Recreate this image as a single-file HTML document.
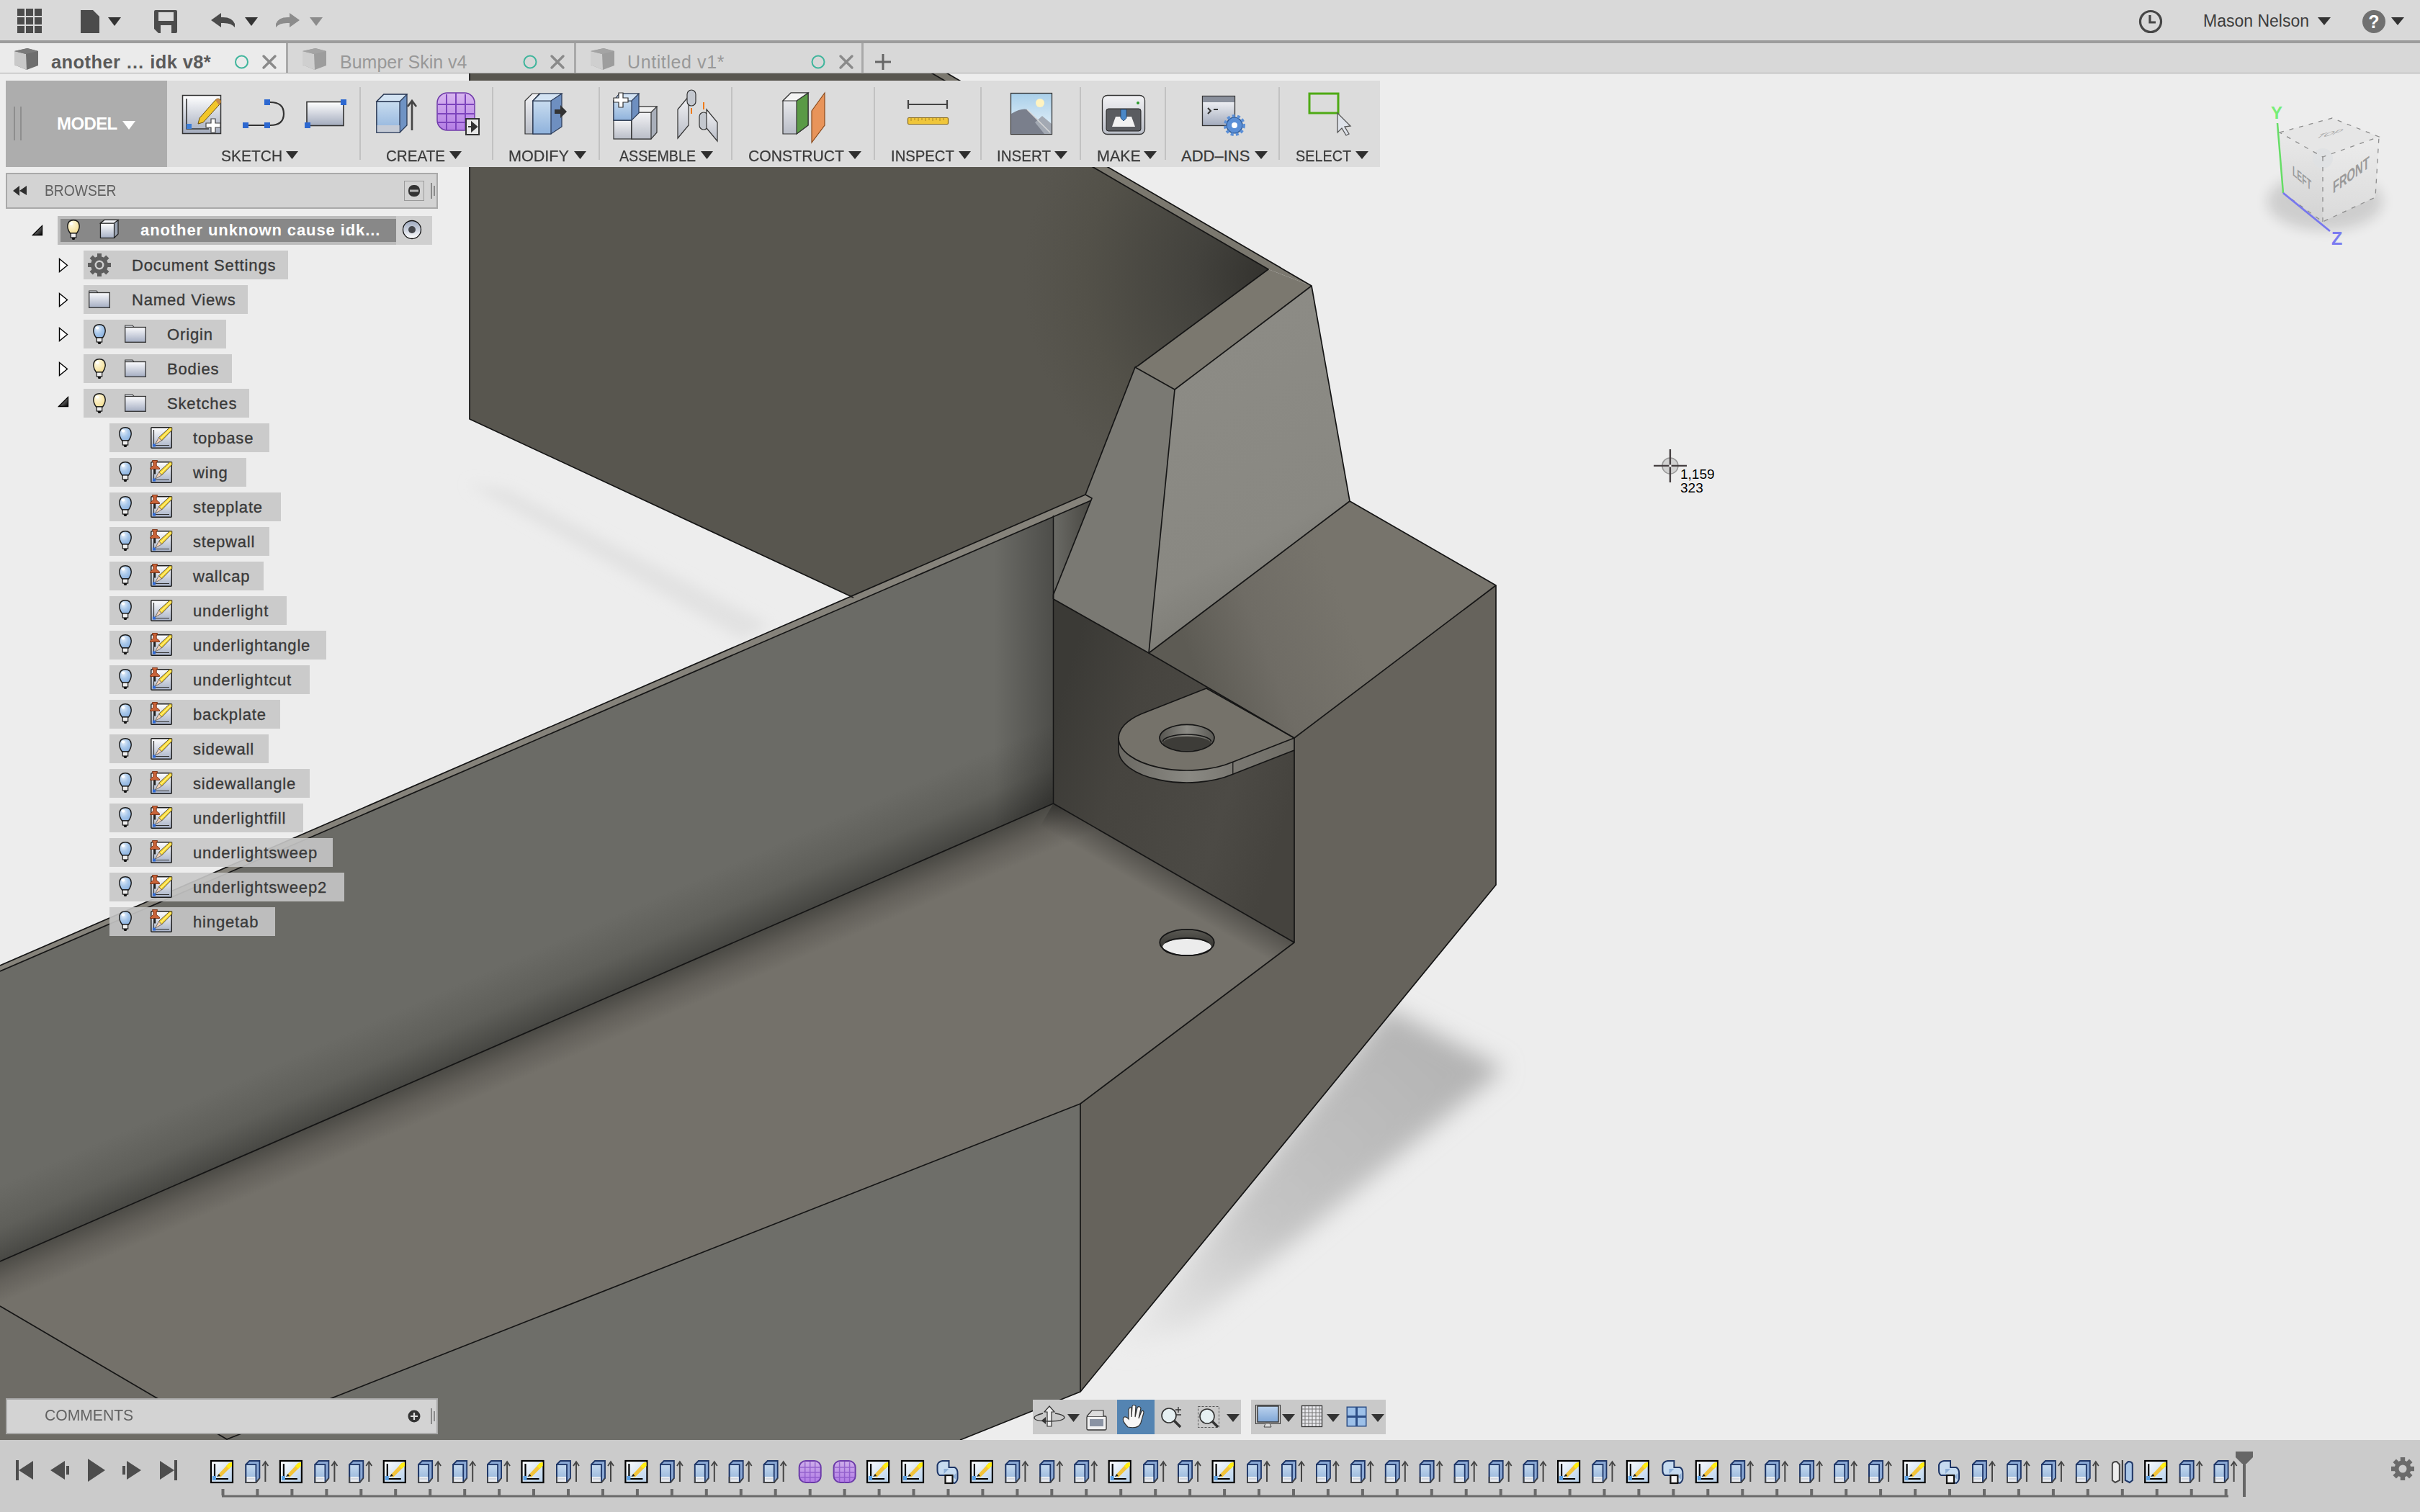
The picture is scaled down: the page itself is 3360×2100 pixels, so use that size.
<!DOCTYPE html>
<html><head><meta charset="utf-8">
<style>
html,body{margin:0;padding:0;}
body{width:3360px;height:2100px;overflow:hidden;position:relative;background:#ededed;font-family:"Liberation Sans",sans-serif;}
.a{position:absolute;}
svg.a{overflow:visible;}
#model{left:0;top:0;}
.tl{position:absolute;font-size:22px;color:#3a3a3a;white-space:nowrap;line-height:22px;-webkit-text-stroke:0.25px #3a3a3a;}
.sep{position:absolute;width:2px;height:101px;top:121px;background:#c2c2c2;}
.row{position:absolute;height:40px;background:rgba(199,199,199,0.9);}
.rt{position:absolute;font-size:23.5px;color:#3a3a3a;white-space:nowrap;line-height:24px;-webkit-text-stroke:0.35px #3a3a3a;}

</style></head><body>
<svg id="model" class="a" width="3360" height="2100" viewBox="0 0 3360 2100">
<defs>
<filter id="blur30" x="-50%" y="-50%" width="200%" height="200%"><feGaussianBlur stdDeviation="30"/></filter>
<filter id="blur12" x="-50%" y="-50%" width="200%" height="200%"><feGaussianBlur stdDeviation="16"/></filter>
<radialGradient id="gBack" cx="1761" cy="385" r="340" gradientUnits="userSpaceOnUse">
<stop offset="0" stop-color="#33322e"/><stop offset="0.3" stop-color="#43423d"/><stop offset="0.75" stop-color="#535149"/><stop offset="1" stop-color="#58564f"/></radialGradient>
<linearGradient id="gCornerAO" x1="1380" y1="0" x2="1463" y2="0" gradientUnits="userSpaceOnUse">
<stop offset="0" stop-color="#000" stop-opacity="0"/><stop offset="1" stop-color="#000" stop-opacity="0.28"/></linearGradient>
<radialGradient id="gWedgeAO" cx="1470" cy="840" r="170" gradientUnits="userSpaceOnUse">
<stop offset="0" stop-color="#000" stop-opacity="0.3"/><stop offset="1" stop-color="#000" stop-opacity="0"/></radialGradient>
<linearGradient id="gShadow" x1="1990" y1="1440" x2="1600" y2="1850" gradientUnits="userSpaceOnUse">
<stop offset="0" stop-color="#b4b4b4"/><stop offset="0.6" stop-color="#c4c4c4"/><stop offset="1" stop-color="#e6e6e6"/></linearGradient>
<linearGradient id="gFront" x1="560" y1="1400" x2="600" y2="1491" gradientUnits="userSpaceOnUse">
<stop offset="0" stop-color="#6b6b66"/><stop offset="0.55" stop-color="#5f5f5a"/><stop offset="1" stop-color="#474743"/></linearGradient>
<linearGradient id="gFloor" x1="600" y1="1491" x2="622" y2="1542" gradientUnits="userSpaceOnUse">
<stop offset="0" stop-color="#4b4a45"/><stop offset="0.5" stop-color="#64615b"/><stop offset="1" stop-color="#74716a"/></linearGradient>
<linearGradient id="gHinge" x1="1463" y1="1000" x2="1797" y2="1100" gradientUnits="userSpaceOnUse">
<stop offset="0" stop-color="#3b3a36"/><stop offset="0.3" stop-color="#46443f"/><stop offset="0.75" stop-color="#4c4a45"/><stop offset="1" stop-color="#45433e"/></linearGradient>
<linearGradient id="gTabSide" x1="1553" y1="0" x2="1797" y2="0" gradientUnits="userSpaceOnUse">
<stop offset="0" stop-color="#6a6862"/><stop offset="0.4" stop-color="#8a8983"/><stop offset="0.65" stop-color="#7a7872"/><stop offset="1" stop-color="#6f6d66"/></linearGradient>
<linearGradient id="gFloorAO2" x1="1630" y1="1212.5" x2="1611" y2="1245" gradientUnits="userSpaceOnUse">
<stop offset="0" stop-color="#000" stop-opacity="0.28"/><stop offset="1" stop-color="#000" stop-opacity="0"/></linearGradient>
<linearGradient id="gWedgeR" x1="1640" y1="500" x2="1850" y2="900" gradientUnits="userSpaceOnUse">
<stop offset="0" stop-color="#8c8b85"/><stop offset="0.6" stop-color="#898882"/><stop offset="1" stop-color="#6f6e68"/></linearGradient>
<linearGradient id="gStepTop" x1="1640" y1="880" x2="1850" y2="800" gradientUnits="userSpaceOnUse">
<stop offset="0" stop-color="#5d5b54"/><stop offset="0.45" stop-color="#6f6c65"/><stop offset="1" stop-color="#77746c"/></linearGradient>
</defs>
<!-- shadows -->
<filter id="blur8" x="-50%" y="-50%" width="200%" height="200%"><feGaussianBlur stdDeviation="9"/></filter><polygon points="650,672 705,680 1070,868 1030,888" fill="#e2e2e2" filter="url(#blur8)"/>
<polygon points="1926,1400 2088,1484 1650,1845 1555,1870" fill="url(#gShadow)" filter="url(#blur12)"/>
<!-- back wall -->
<polygon points="652,100 1291,100 1761,374 1580,508 1576,510 1507,687 1185,830 652,582" fill="url(#gBack)"/>
<polygon points="1291,100 1312,100 1821,397 1761,374" fill="#7b786f"/>
<polygon points="1761,374 1821,397 1631,541 1576,510 1580,508" fill="#7b786f"/>
<!-- wedge -->
<polygon points="1576,510 1631,541 1595,907 1462.5,832 1462.5,826 1516,693 1507,687" fill="#7a7973"/>

<polygon points="1631,541 1821,397 1874,696 1595,907" fill="url(#gWedgeR)"/>
<!-- step top -->
<polygon points="1874,696 2077,813 1797,1025 1595,907" fill="url(#gStepTop)"/>
<!-- inner hinge wall -->
<polygon points="1462.5,832 1595,907 1797,1025 1797,1309 1462.5,1116" fill="url(#gHinge)"/>
<!-- front wall -->
<polygon points="0,1349 1462.5,716 1462.5,1116 0,1752" fill="url(#gFront)"/>
<polygon points="1380,752 1462.5,716 1462.5,1116 1380,1152" fill="url(#gCornerAO)"/>
<linearGradient id="gEnd" x1="1463" y1="0" x2="1510" y2="0" gradientUnits="userSpaceOnUse"><stop offset="0" stop-color="#6a6a65"/><stop offset="1" stop-color="#4c4b46"/></linearGradient><polygon points="1462.5,716 1515,695 1462.5,826" fill="url(#gEnd)"/>
<polygon points="0,1341 1507,687 1516,692 1515,695 0,1349" fill="#86837b"/>
<!-- floor -->
<polygon points="0,1752 1462.5,1116 1797,1309 1500,1533 315,1999 0,1814" fill="url(#gFloor)"/>
<polygon points="1462.5,1116 1797,1309 1772,1352 1437.5,1159" fill="url(#gFloorAO2)"/>
<polygon points="0,1814 315,1999 315,2000 0,2000" fill="#6e6c66"/>
<polygon points="1500,1533 1500,1933 1333,2000 315,2000 315,1999" fill="#6e6e69"/>
<!-- step right face -->
<polygon points="1797,1025 2077,813 2077,1229 1500,1933 1500,1533 1797,1309" fill="#66635c"/>
<!-- hinge tab -->
<linearGradient id="gHoleWall" x1="1610" y1="0" x2="1686" y2="0" gradientUnits="userSpaceOnUse">
<stop offset="0" stop-color="#55544f"/><stop offset="0.5" stop-color="#8c8b85"/><stop offset="1" stop-color="#5a5954"/></linearGradient>
<linearGradient id="gHoleDark" x1="0" y1="1291" x2="0" y2="1310" gradientUnits="userSpaceOnUse">
<stop offset="0" stop-color="#5a5953"/><stop offset="1" stop-color="#3e3d39"/></linearGradient>
<clipPath id="cpHole1"><ellipse cx="1648" cy="1025" rx="38" ry="18.7"/></clipPath>
<clipPath id="cpHole2"><ellipse cx="1648" cy="1309" rx="37.8" ry="18.2"/></clipPath>
<path d="M1553,1025 A95,45 0 0 0 1711.8,1058.3 L1797,1025 L1797,1042 L1711.8,1075.3 A95,45 0 0 1 1553,1042 Z" fill="url(#gTabSide)"/>
<path d="M1675,956 L1797,1025 L1711.8,1058.3 A95,45 0 0 1 1553,1025 A95,45 0 0 1 1584.2,991.7 Z" fill="#75726a"/>
<ellipse cx="1648" cy="1025" rx="38" ry="18.7" fill="url(#gHoleWall)"/>
<ellipse cx="1648" cy="1032.8" rx="33.5" ry="10" fill="#3d3c38" clip-path="url(#cpHole1)"/>
<!-- floor hole -->
<ellipse cx="1648" cy="1309" rx="37.8" ry="18.2" fill="url(#gHoleDark)"/>
<ellipse cx="1648" cy="1315.5" rx="34" ry="11.6" fill="#ececec" clip-path="url(#cpHole2)"/>
<!-- edges -->
<g stroke="#151515" stroke-width="1.7" fill="none" stroke-linejoin="round">
<polyline points="652,100 652,582 1185,830"/>
<polyline points="1312,100 1821,397 1874,696 2077,813 2077,1229 1500,1933 1333,2000"/>
<polyline points="1291,100 1761,374 1580,508 1576,510 1507,687"/>
<polyline points="1576,510 1631,541 1821,397"/>
<polyline points="1631,541 1595,907 1874,696"/>
<polyline points="1595,907 1797,1025 2077,813"/>
<polyline points="1462.5,832 1595,907"/>
<polyline points="1797,1025 1797,1309 1500,1533 1500,1933"/>
<polyline points="1797,1309 1462.5,1116 0,1752"/>
<polyline points="1500,1533 315,1999 0,1814"/>
<polyline points="0,1341 1507,687 1516,692 1462.5,826 1462.5,832"/>
<polyline points="0,1349 1515,695"/>
<polyline points="1462.5,716 1462.5,1116" stroke-width="1.5"/>
<path d="M1675,956 L1797,1025 L1711.8,1058.3 A95,45 0 0 1 1553,1025 A95,45 0 0 1 1584.2,991.7 Z"/>
<path d="M1553,1025 L1553,1042 A95,45 0 0 0 1711.8,1075.3 L1797,1042" stroke-width="1.6"/>
<path d="M1711.8,1058.3 L1711.8,1075.3" stroke-width="1.2"/>
<ellipse cx="1648" cy="1025" rx="38" ry="18.7"/>
<path d="M1614.5,1030 A33.5,10 0 0 1 1681.5,1030" stroke-width="1.6"/>
<ellipse cx="1648" cy="1309" rx="37.8" ry="18.2"/>
<path d="M1614,1315.5 A34,11.6 0 0 0 1682,1315.5" stroke-width="1.6"/>
<path d="M1618,1309 A34,11.6 0 0 1 1678,1309" stroke-width="1.6"/>
</g>

</svg>
<div class="a" style="left:0;top:0;width:3360px;height:56px;background:#d9d9d9;"></div>
<div class="a" style="left:0;top:56px;width:3360px;height:4px;background:#9c9c9c;"></div>
<svg class="a" style="left:0;top:0" width="460" height="56">
 <g fill="#4b4b4b">
  <rect x="24" y="12" width="10" height="10"/><rect x="36" y="12" width="10" height="10"/><rect x="48" y="12" width="10" height="10"/>
  <rect x="24" y="24" width="10" height="10"/><rect x="36" y="24" width="10" height="10"/><rect x="48" y="24" width="10" height="10"/>
  <rect x="24" y="36" width="10" height="10"/><rect x="36" y="36" width="10" height="10"/><rect x="48" y="36" width="10" height="10"/>
  <path d="M112,14 L129,14 L138,23 L138,46 L112,46 Z"/>
  <path d="M150,24 L168,24 L159,36 Z" fill="#333"/>
  <path d="M216,14 L244,14 Q246,14 246,16 L246,44 Q246,46 244,46 L220,46 L214,40 L214,16 Q214,14 216,14 Z M220,17 L220,29 L241,29 L241,17 Z M223,35 L223,46 L238,46 L238,35 Z"/>
  <rect x="226" y="37" width="3" height="7" fill="#d9d9d9"/>
  <path d="M293,28 L307,18 L307,24 Q322,23 326,33 L326,38 Q321,31 307,32 L307,38 Z"/>
  <path d="M340,24 L358,24 L349,36 Z" fill="#333"/>
  <path d="M416,28 L402,18 L402,24 Q387,23 383,33 L383,38 Q388,31 402,32 L402,38 Z" fill="#8c8c8c"/>
  <path d="M430,24 L448,24 L439,36 Z" fill="#8c8c8c"/>
 </g>
</svg>
<svg class="a" style="left:2960px;top:0" width="400" height="56">
 <circle cx="26" cy="30" r="14.5" fill="none" stroke="#474747" stroke-width="3.2"/>
 <path d="M25,21 L25,31 L33,31" fill="none" stroke="#474747" stroke-width="3.2"/>
 <path d="M258,24 L276,24 L267,35 Z" fill="#333"/>
 <circle cx="336" cy="30" r="16" fill="#707070"/>
 <text x="336" y="39" text-anchor="middle" font-family="Liberation Sans" font-weight="700" font-size="25" fill="#fff">?</text>
 <path d="M360,24 L378,24 L369,35 Z" fill="#333"/>
</svg>
<div class="a" style="left:3059px;top:16px;font-size:23px;color:#3d3d3d;line-height:26px;white-space:nowrap;">Mason Nelson</div>
<div class="a" style="left:0;top:60px;width:3360px;height:41px;background:#d8d8d8;"></div>
<div class="a" style="left:0;top:101px;width:3360px;height:1px;background:#a8a8a8;"></div>
<div class="a" style="left:0;top:60px;width:397px;height:41px;background:#ebebeb;"></div>
<div class="a" style="left:397px;top:60px;width:3px;height:42px;background:#a9a9a9;"></div>
<div class="a" style="left:797px;top:60px;width:3px;height:42px;background:#a9a9a9;"></div>
<div class="a" style="left:1196px;top:60px;width:3px;height:42px;background:#a9a9a9;"></div>
<svg class="a" style="left:0;top:60px" width="1260" height="42">
 <g id="cube">
  <path d="M20,11 L38,7 L53,11 L53,31 L37,37 L20,30 Z" fill="#6e6e6e"/>
  <path d="M20,11 L36,15 L37,37 L20,30 Z" fill="#c9c9c9"/>
  <path d="M20,11 L38,7 L53,11 L36,15 Z" fill="#7a7a7a"/>
 </g>
 <g transform="translate(400,0)" opacity="0.55"><use href="#cube"/></g>
 <g transform="translate(800,0)" opacity="0.55"><use href="#cube"/></g>
 <circle cx="335.5" cy="26" r="8.5" fill="none" stroke="#3fb59c" stroke-width="2"/>
 <path d="M366,18 L382,34 M382,18 L366,34" stroke="#8a8a8a" stroke-width="3.4" stroke-linecap="round"/>
 <circle cx="736" cy="26" r="8.5" fill="none" stroke="#3fb59c" stroke-width="2"/>
 <path d="M766,18 L782,34 M782,18 L766,34" stroke="#8a8a8a" stroke-width="3.4" stroke-linecap="round"/>
 <circle cx="1136" cy="26" r="8.5" fill="none" stroke="#3fb59c" stroke-width="2"/>
 <path d="M1167,18 L1183,34 M1183,18 L1167,34" stroke="#8a8a8a" stroke-width="3.4" stroke-linecap="round"/>
 <path d="M1226,15 L1226,37 M1215,26 L1237,26" stroke="#666" stroke-width="3"/>
</svg>
<div class="a" style="left:71px;top:72px;font-size:25.5px;font-weight:700;color:#5a5a5a;line-height:28px;white-space:nowrap;letter-spacing:0.4px">another … idk v8*</div>
<div class="a" style="left:472px;top:72px;font-size:25px;color:#989898;line-height:28px;white-space:nowrap;">Bumper Skin v4</div>
<div class="a" style="left:871px;top:72px;font-size:25px;color:#989898;line-height:28px;white-space:nowrap;letter-spacing:0.6px">Untitled v1*</div>
<div class="a" style="left:8px;top:112px;width:1908px;height:120px;background:#dcdcdc;"></div>
<div class="a" style="left:8px;top:112px;width:224px;height:120px;background:#adadad;"></div>
<div class="a" style="left:19px;top:148px;width:2px;height:47px;background:#8e8e8e;"></div>
<div class="a" style="left:28px;top:148px;width:2px;height:47px;background:#8e8e8e;"></div>
<div class="a" style="left:79px;top:159px;font-size:24px;font-weight:700;color:#fff;line-height:26px;letter-spacing:-0.6px;white-space:nowrap;">MODEL</div>
<svg class="a" style="left:0;top:112px" width="1920" height="120">
 <defs>
  <linearGradient id="gPaper" x1="0" y1="0" x2="0" y2="1"><stop offset="0" stop-color="#ffffff"/><stop offset="1" stop-color="#a3abbd"/></linearGradient>
  <linearGradient id="gBlue" x1="0" y1="0" x2="0" y2="1"><stop offset="0" stop-color="#c8dcef"/><stop offset="1" stop-color="#8fb2dc"/></linearGradient>
  <linearGradient id="gGray" x1="0" y1="0" x2="0" y2="1"><stop offset="0" stop-color="#f3f3f5"/><stop offset="1" stop-color="#b9bdc7"/></linearGradient>
  <linearGradient id="gPurple" x1="0" y1="0" x2="0" y2="1"><stop offset="0" stop-color="#d9b7f0"/><stop offset="1" stop-color="#b37de4"/></linearGradient>
  <linearGradient id="gSky" x1="0" y1="0" x2="0" y2="1"><stop offset="0" stop-color="#a9cfe9"/><stop offset="1" stop-color="#eaf4fb"/></linearGradient>
 </defs>
 <path d="M170,56 L188,56 L179,68 Z" fill="#fff"/>
 <!-- sketch -->
 <rect x="253.5" y="20.5" width="53" height="53" fill="url(#gPaper)" stroke="#333" stroke-width="1.5"/>
 <path d="M259,25 L259,67 L290,67" fill="none" stroke="#333" stroke-width="1.6"/>
 <rect x="259" y="60" width="7" height="7" fill="#3e7fd8"/>
 <path d="M277,52 L299,27 Q303,23 306,27 Q308,30 304,34 L282,58 L275,60 Z" fill="#f2c62a" stroke="#6b4f12" stroke-width="1"/>
 <path d="M299,27 Q303,23 306,27 Q308,30 304,34 Z" fill="#c78a4a"/>
 <path d="M293,53 L299,53 L299,59 L306,59 L306,65 L299,65 L299,72 L293,72 L293,65 L286,65 L286,59 L293,59 Z" fill="#fff" stroke="#444" stroke-width="1.2"/>
 <!-- arc -->
 <path d="M345,62 L367,62 M375,30 Q394,30 394,46 Q394,62 375,62" fill="none" stroke="#333" stroke-width="2.2"/>
 <rect x="337" y="58" width="8" height="8" fill="#2d68d0"/><rect x="367" y="58" width="8" height="8" fill="#2d68d0"/><rect x="367" y="26" width="8" height="8" fill="#2d68d0"/>
 <!-- rect -->
 <rect x="426" y="29.5" width="51" height="33" fill="url(#gPaper)" stroke="#333" stroke-width="1.6"/>
 <rect x="423" y="58" width="8" height="8" fill="#2d68d0"/><rect x="473" y="26" width="8" height="8" fill="#2d68d0"/>
 <!-- extrude -->
 <path d="M523,29 L533,19 L565,19 L565,62 L555,72 L523,72 Z" fill="#6f93c4" stroke="#2b3a55" stroke-width="1.3"/>
 <rect x="523" y="29" width="32" height="43" fill="url(#gBlue)" stroke="#2b3a55" stroke-width="1.3"/>
 <rect x="523.6" y="62" width="31" height="9.5" fill="#c5cbd6"/>
 <path d="M523,29 L533,19 L565,19 L555,29 Z" fill="#d3e3f3" stroke="#2b3a55" stroke-width="1.3"/>
 <path d="M572,69 L572,30 M566,36 L572,28 L578,36" fill="none" stroke="#444" stroke-width="2.6"/>
 <!-- form -->
 <rect x="607" y="17" width="52" height="52" rx="14" fill="url(#gPurple)" stroke="#6f3aa8" stroke-width="1.5"/>
 <path d="M620,19 L620,68 M633,17 L633,69 M646,19 L646,68 M608,33 L658,33 M607,46 L659,46 M608,58 L658,58" stroke="#7d44bd" stroke-width="2"/>
 <rect x="647" y="53" width="18" height="22" fill="#e8e8e8" stroke="#333" stroke-width="2"/>
 <path d="M650,64 L658,64 M655,58 L662,64 L655,70 Z" fill="#333" stroke="#333" stroke-width="2"/>
 <!-- modify -->
 <path d="M729,28 L739,18 L749,18 L740,28 L740,74 L729,74 Z" fill="url(#gGray)" stroke="#333" stroke-width="1.2"/>
 <path d="M740,28 L750,18 L780,18 L780,64 L765,74 L740,74 Z" fill="#6e8fc0" stroke="#2b3a55" stroke-width="1.2"/>
 <rect x="740" y="28" width="25" height="46" fill="url(#gBlue)" stroke="#2b3a55" stroke-width="1.2"/>
 <path d="M740,28 L750,18 L780,18 L765,28 Z" fill="#d3e3f3" stroke="#2b3a55" stroke-width="1.2"/>
 <path d="M770,40 L778,40 L778,34 L787,43 L778,52 L778,46 L770,46 Z" fill="#333"/>
 <!-- assemble new component -->
 <rect x="852" y="55" width="25" height="26" fill="url(#gGray)" stroke="#333" stroke-width="1.2"/>
 <path d="M877,44 L884,36 L912,36 L912,72 L904,81 L877,81 Z" fill="#a9afba" stroke="#333" stroke-width="1.2"/>
 <rect x="877" y="44" width="27" height="37" fill="url(#gGray)" stroke="#333" stroke-width="1.2"/>
 <path d="M877,44 L884,36 L912,36 L904,44 Z" fill="#f0f0f0" stroke="#333" stroke-width="1.2"/>
 <path d="M852,28 L860,18 L887,18 L887,45 L877,55 L852,55 Z" fill="#6e8fc0" stroke="#2b3a55" stroke-width="1.2"/>
 <rect x="852" y="28" width="25" height="27" fill="url(#gBlue)" stroke="#2b3a55" stroke-width="1.2"/>
 <path d="M852,28 L860,18 L887,18 L877,28 Z" fill="#d3e3f3" stroke="#2b3a55" stroke-width="1.2"/>
 <path d="M859,17 L865,17 L865,24 L872,24 L872,30 L865,30 L865,37 L859,37 L859,30 L852,30 L852,24 L859,24 Z" fill="#fff" stroke="#333" stroke-width="1.2"/>
 <!-- joint -->
 <path d="M941,40 L956,22 L956,62 L941,80 Z" fill="url(#gGray)" stroke="#333" stroke-width="1.2"/>
 <rect x="954" y="13" width="12" height="22" rx="6" fill="#c4c8cf" stroke="#333" stroke-width="1.2"/>
 <rect x="971" y="44" width="12" height="24" rx="6" fill="#c4c8cf" stroke="#333" stroke-width="1.2"/>
 <path d="M981,40 L996,58 L996,84 L981,66 Z" fill="url(#gGray)" stroke="#333" stroke-width="1.2"/>
 <path d="M960,38 L960,46 M977,30 L977,40" stroke="#f07a18" stroke-width="2"/>
 <!-- construct -->
 <path d="M1087,28 L1098,17 L1122,17 L1122,62 L1106,74 L1087,74 Z" fill="url(#gGray)" stroke="#333" stroke-width="1.2"/>
 <path d="M1106,28 L1122,17 L1122,62 L1106,74 Z" fill="#5a9a46" stroke="#333" stroke-width="1.2"/>
 <path d="M1087,28 L1098,17 L1122,17 L1106,28 Z" fill="#f4f4f4" stroke="#333" stroke-width="1.2"/>
 <path d="M1127,42 L1145,17 L1145,62 L1127,86 Z" fill="#e8945a" stroke="#8a4a1c" stroke-width="1.2"/>
 <!-- ruler -->
 <path d="M1261,27 L1261,39 M1315,27 L1315,39 M1261,33 L1315,33" stroke="#444" stroke-width="2.2"/>
 <rect x="1260.5" y="51.5" width="56" height="9" rx="1.5" fill="#f0c63a" stroke="#8a6a14" stroke-width="1.2"/>
 <path d="M1265,52 L1265,56 M1270,52 L1270,55 M1275,52 L1275,56 M1280,52 L1280,55 M1285,52 L1285,56 M1290,52 L1290,55 M1295,52 L1295,56 M1300,52 L1300,55 M1305,52 L1305,56 M1310,52 L1310,55" stroke="#9a7a20" stroke-width="0.8"/>
 <!-- insert -->
 <rect x="1403.5" y="17.5" width="57" height="57" fill="url(#gSky)" stroke="#333" stroke-width="1.3"/>
 <circle cx="1444" cy="31" r="6" fill="#fff3c0"/>
 <path d="M1404,62 L1404,46 Q1418,38 1426,40 L1460,72 L1460,74 L1404,74 Z" fill="#7a7f8c"/>
 <path d="M1437,58 L1447,49 L1460,60 L1460,74 L1450,74 Z" fill="#a3a9b3"/>
 <path d="M1426,40 L1458,72" stroke="#d8d8d8" stroke-width="1.5"/>
 <!-- make -->
 <rect x="1530.5" y="20.5" width="59" height="54" rx="7" fill="url(#gGray)" stroke="#333" stroke-width="1.3"/>
 <rect x="1536" y="39" width="48" height="31" rx="3" fill="#5a5c60" stroke="#222" stroke-width="1"/>
 <path d="M1544,64 L1549,50 L1571,50 L1576,64 Z" fill="#f2f2f2"/>
 <path d="M1556,40 L1564,40 L1564,52 L1560,56 L1556,52 Z" fill="#4a88c8" stroke="#1f3f66" stroke-width="0.8"/>
 <circle cx="1580" cy="31" r="2" fill="#2a9a2a"/>
 <!-- addins -->
 <rect x="1669.5" y="21.5" width="45" height="41" fill="url(#gPaper)" stroke="#333" stroke-width="1.3"/>
 <rect x="1670" y="22" width="44" height="8" fill="#8a909c"/>
 <path d="M1677,38 L1681,42 L1677,46 M1685,40 L1691,40" fill="none" stroke="#333" stroke-width="2"/>
 <circle cx="1714" cy="62" r="11" fill="#5b8fd6" stroke="#27528c" stroke-width="1.2"/>
 <circle cx="1714" cy="62" r="13" fill="none" stroke="#5b8fd6" stroke-width="4" stroke-dasharray="4 3.2"/>
 <circle cx="1714" cy="62" r="4" fill="#fff"/>
 <!-- select -->
 <rect x="1818" y="18" width="40" height="27" fill="none" stroke="#4eaa14" stroke-width="3"/>
 <path d="M1857,45 L1857,72 L1863,66 L1869,76 L1873,74 L1867,64 L1875,63 Z" fill="#dfe3ea" stroke="#555" stroke-width="1.3"/>
</svg>
<div class="sep" style="left:499px"></div>
<div class="sep" style="left:683px"></div>
<div class="sep" style="left:831px"></div>
<div class="sep" style="left:1015px"></div>
<div class="sep" style="left:1213px"></div>
<div class="sep" style="left:1361px"></div>
<div class="sep" style="left:1499px"></div>
<div class="sep" style="left:1617px"></div>
<div class="sep" style="left:1775px"></div>
<div class="tl" style="left:307px;top:206px;transform:scaleX(0.953);transform-origin:0 0;">SKETCH</div>
<div class="tl" style="left:536px;top:206px;transform:scaleX(0.936);transform-origin:0 0;">CREATE</div>
<div class="tl" style="left:706px;top:206px;transform:scaleX(0.981);transform-origin:0 0;">MODIFY</div>
<div class="tl" style="left:860px;top:206px;transform:scaleX(0.894);transform-origin:0 0;">ASSEMBLE</div>
<div class="tl" style="left:1039px;top:206px;transform:scaleX(0.963);transform-origin:0 0;">CONSTRUCT</div>
<div class="tl" style="left:1237px;top:206px;transform:scaleX(0.922);transform-origin:0 0;">INSPECT</div>
<div class="tl" style="left:1384px;top:206px;transform:scaleX(0.934);transform-origin:0 0;">INSERT</div>
<div class="tl" style="left:1523px;top:206px;transform:scaleX(0.977);transform-origin:0 0;">MAKE</div>
<div class="tl" style="left:1640px;top:206px;transform:scaleX(1.0);transform-origin:0 0;">ADD–INS</div>
<div class="tl" style="left:1799px;top:206px;transform:scaleX(0.9);transform-origin:0 0;">SELECT</div>
<svg class="a" style="left:0;top:200px" width="1920" height="30">
 <g fill="#2e2e2e">
 <path d="M397,10 L414,10 L405.5,21 Z"/>
 <path d="M624,10 L641,10 L632.5,21 Z"/>
 <path d="M797,10 L814,10 L805.5,21 Z"/>
 <path d="M973,10 L990,10 L981.5,21 Z"/>
 <path d="M1178,10 L1196,10 L1187,21 Z"/>
 <path d="M1331,10 L1348,10 L1339.5,21 Z"/>
 <path d="M1464,10 L1482,10 L1473,21 Z"/>
 <path d="M1588,10 L1606,10 L1597,21 Z"/>
 <path d="M1742,10 L1760,10 L1751,21 Z"/>
 <path d="M1882,10 L1900,10 L1891,21 Z"/>
 </g>
</svg>
<svg width="0" height="0" style="position:absolute">
<defs>
 <radialGradient id="bulbY" cx="0.35" cy="0.3" r="0.8"><stop offset="0" stop-color="#fffbe6"/><stop offset="1" stop-color="#f3dc8c"/></radialGradient>
 <radialGradient id="bulbB" cx="0.35" cy="0.3" r="0.8"><stop offset="0" stop-color="#e6f0fb"/><stop offset="0.5" stop-color="#a9c8ea"/><stop offset="1" stop-color="#86aede"/></radialGradient>
 <linearGradient id="gPap2" x1="0" y1="0" x2="0" y2="1"><stop offset="0" stop-color="#ffffff"/><stop offset="1" stop-color="#a7b1c6"/></linearGradient>
 <linearGradient id="gFold" x1="0" y1="0" x2="0" y2="1"><stop offset="0" stop-color="#fbfbfd"/><stop offset="1" stop-color="#a4adc2"/></linearGradient>
 <linearGradient id="gRadio" x1="0" y1="0" x2="0" y2="1"><stop offset="0" stop-color="#9aa6bd"/><stop offset="1" stop-color="#ffffff"/></linearGradient>
 <symbol id="bulb" viewBox="0 0 18 29" overflow="visible">
  <path d="M4.5,19 Q0.5,13.5 0.8,8.5 Q1.5,0.8 9,0.8 Q16.5,0.8 17.2,8.5 Q17.5,13.5 13.5,19 Z" fill="inherit" stroke="#1a1a1a" stroke-width="1.4"/>
  <ellipse cx="6" cy="5.5" rx="2.3" ry="2" fill="#fff" opacity="0.9"/>
  <rect x="5.3" y="19" width="7.4" height="6" fill="#eee" stroke="#1a1a1a" stroke-width="1.2"/>
  <path d="M6.5,25 L11.5,25 L10.5,28 L7.5,28 Z" fill="#111"/>
 </symbol>
 <symbol id="folder" viewBox="0 0 30 25" overflow="visible">
  <path d="M0.7,3.5 L0.7,1 L11,1 L13,3.5 Z" fill="#dfe3ea" stroke="#333" stroke-width="1.1"/>
  <rect x="0.7" y="3.5" width="28.6" height="20.8" fill="url(#gFold)" stroke="#333" stroke-width="1.3"/>
 </symbol>
 <symbol id="sk" viewBox="0 0 30 30" overflow="visible">
  <rect x="0.8" y="0.8" width="28.4" height="28.4" rx="1" fill="url(#gPap2)" stroke="#1e1e1e" stroke-width="1.5"/>
  <path d="M4.5,4 L4.5,25.5 L26,25.5" fill="none" stroke="#333" stroke-width="1.2"/>
  <rect x="3" y="23.5" width="4" height="4" fill="#2f6ad6"/>
  <path d="M11.5,14.5 L26.5,0.8 L29.8,0.8 L29.8,4.5 L15.5,19 Z" fill="#f6d22e" stroke="#333" stroke-width="0.8"/><path d="M13.5,16.8 L28.2,2.6" stroke="#fff27a" stroke-width="1.6"/>
  <path d="M11.5,14.5 L15.5,19 L6.5,24 Z" fill="#f3d2b6" stroke="#555" stroke-width="0.8"/>
 </symbol>
 <symbol id="pin" viewBox="0 0 14 20" overflow="visible">
  <path d="M3.5,0.5 L10.5,0.5 L10,3 L9.2,3 L9.2,7.5 L13.5,11 L13.5,12.5 L0.5,12.5 L0.5,11 L4.8,7.5 L4.8,3 L4,3 Z" fill="#c9643a" stroke="#7a2e10" stroke-width="0.9"/>
  <rect x="6" y="12.5" width="2.2" height="7" fill="#222"/>
 </symbol>
</defs></svg>
<div class="a" style="left:8px;top:240px;width:596px;height:46px;background:#d3d3d3;border:2px solid #a9a9a9;border-right-width:2px;"></div>
<svg class="a" style="left:0;top:232px" width="620" height="60"><path d="M18,33 L27,26 L27,40 Z M27,33 L37,26 L37,39 Z" fill="#2e2e2e"/><rect x="561.5" y="19.5" width="27" height="27" fill="none" stroke="#9a9a9a" stroke-width="1"/><rect x="567" y="25" width="16" height="16" rx="7" fill="#333"/><rect x="569" y="31.5" width="12" height="3" fill="#b5b5b5"/><rect x="598" y="22" width="2" height="22" fill="#8a8a8a"/><rect x="602" y="26" width="2" height="14" fill="#8a8a8a"/></svg>
<div class="a" style="left:62px;top:253px;font-size:22px;line-height:24px;color:#626262;white-space:nowrap;transform:scaleX(0.875);transform-origin:0 0;">BROWSER</div>
<div class="a" style="left:80px;top:300px;width:470px;height:40px;background:#bcbcbc;"></div>
<div class="a" style="left:550px;top:300px;width:50px;height:40px;background:#cfcfcf;"></div>
<div class="a" style="left:84px;top:304px;width:466px;height:32px;background:#888888;"></div>
<svg class="a" style="left:0;top:296px" width="620" height="48"><defs><linearGradient id="gTri" x1="0" y1="0" x2="1" y2="1"><stop offset="0" stop-color="#bbb"/><stop offset="1" stop-color="#000"/></linearGradient></defs><path d="M45.5,30.5 L58.5,17.5 L58.5,30.5 Z" fill="url(#gTri)" stroke="#000" stroke-width="1.3"/><use href="#bulb" x="93" y="9" width="18" height="29" fill="url(#bulbY)"/><path d="M139.5,14 L145,9.5 L164,9.5 L164,29 L158.5,34.5 L139.5,34.5 Z" fill="#9aa3b2" stroke="#1e1e1e" stroke-width="1.2"/><rect x="139.5" y="14" width="19" height="20.5" fill="url(#gPap2)" stroke="#1e1e1e" stroke-width="1.2"/><path d="M139.5,14 L145,9.5 L164,9.5 L158.5,14 Z" fill="#f2f3f6" stroke="#1e1e1e" stroke-width="1.2"/><circle cx="572" cy="23" r="12.5" fill="url(#gRadio)" stroke="#111" stroke-width="1.3"/><circle cx="572" cy="23" r="5" fill="#45474c"/></svg>
<div class="a" style="left:195px;top:300px;font-size:22px;font-weight:700;line-height:40px;color:#fff;white-space:nowrap;letter-spacing:0.9px;">another unknown cause idk...</div>
<div class="row" style="left:116px;top:348px;width:284px;"></div>
<svg class="a" style="left:0;top:348px" width="220" height="40"><path d="M82.5,11.5 L93.5,20.5 L82.5,29.5 Z" fill="#fff" stroke="#000" stroke-width="1.4"/><g transform="translate(138,20)"><path d="M-2.5,-16 L2.5,-16 L3.5,-11 L8,-9 L12,-12 L15.5,-8.5 L12.5,-4.5 L14,0 L16,-0 L16,0 Z" fill="none"/><circle r="12" fill="#5e5e5e"/><rect x="-3" y="-16" width="6" height="8" fill="#5e5e5e" transform="rotate(0)"/><rect x="-3" y="-16" width="6" height="8" fill="#5e5e5e" transform="rotate(45)"/><rect x="-3" y="-16" width="6" height="8" fill="#5e5e5e" transform="rotate(90)"/><rect x="-3" y="-16" width="6" height="8" fill="#5e5e5e" transform="rotate(135)"/><rect x="-3" y="-16" width="6" height="8" fill="#5e5e5e" transform="rotate(180)"/><rect x="-3" y="-16" width="6" height="8" fill="#5e5e5e" transform="rotate(225)"/><rect x="-3" y="-16" width="6" height="8" fill="#5e5e5e" transform="rotate(270)"/><rect x="-3" y="-16" width="6" height="8" fill="#5e5e5e" transform="rotate(315)"/><circle r="6.5" fill="#cfcfcf"/><circle r="4" fill="#5e5e5e"/></g></svg>
<div class="rt" style="left:183px;top:349px;font-size:22px;line-height:40px;letter-spacing:0.85px;">Document Settings</div>
<div class="row" style="left:116px;top:396px;width:228px;"></div>
<svg class="a" style="left:0;top:396px" width="220" height="40"><path d="M82.5,11.5 L93.5,20.5 L82.5,29.5 Z" fill="#fff" stroke="#000" stroke-width="1.4"/><use href="#folder" x="123" y="7" width="30" height="25"/></svg>
<div class="rt" style="left:183px;top:397px;font-size:22px;line-height:40px;letter-spacing:0.85px;">Named Views</div>
<div class="row" style="left:116px;top:444px;width:198px;"></div>
<svg class="a" style="left:0;top:444px" width="220" height="40"><path d="M82.5,11.5 L93.5,20.5 L82.5,29.5 Z" fill="#fff" stroke="#000" stroke-width="1.4"/><use href="#bulb" x="129" y="6" width="18" height="29" fill="url(#bulbB)"/><use href="#folder" x="173" y="7" width="30" height="25"/></svg>
<div class="rt" style="left:232px;top:445px;font-size:22px;line-height:40px;letter-spacing:0.85px;">Origin</div>
<div class="row" style="left:116px;top:492px;width:206px;"></div>
<svg class="a" style="left:0;top:492px" width="220" height="40"><path d="M82.5,11.5 L93.5,20.5 L82.5,29.5 Z" fill="#fff" stroke="#000" stroke-width="1.4"/><use href="#bulb" x="129" y="6" width="18" height="29" fill="url(#bulbY)"/><use href="#folder" x="173" y="7" width="30" height="25"/></svg>
<div class="rt" style="left:232px;top:493px;font-size:22px;line-height:40px;letter-spacing:0.85px;">Bodies</div>
<div class="row" style="left:116px;top:540px;width:230px;"></div>
<svg class="a" style="left:0;top:540px" width="220" height="40"><path d="M81.5,24.5 L94.5,11.5 L94.5,24.5 Z" fill="url(#gTri)" stroke="#000" stroke-width="1.3"/><use href="#bulb" x="129" y="6" width="18" height="29" fill="url(#bulbY)"/><use href="#folder" x="173" y="7" width="30" height="25"/></svg>
<div class="rt" style="left:232px;top:541px;font-size:22px;line-height:40px;letter-spacing:0.85px;">Sketches</div>
<div class="row" style="left:152px;top:588px;width:222px;"></div>
<svg class="a" style="left:150px;top:588px" width="100" height="40"><use href="#bulb" x="15" y="5" width="18" height="29" fill="url(#bulbB)"/><use href="#sk" x="59" y="5" width="30" height="30"/></svg>
<div class="rt" style="left:268px;top:589px;font-size:22px;line-height:40px;letter-spacing:0.85px;">topbase</div>
<div class="row" style="left:152px;top:636px;width:190px;"></div>
<svg class="a" style="left:150px;top:636px" width="100" height="40"><use href="#bulb" x="15" y="5" width="18" height="29" fill="url(#bulbB)"/><use href="#sk" x="59" y="5" width="30" height="30"/><use href="#pin" x="58" y="3" width="14" height="20"/></svg>
<div class="rt" style="left:268px;top:637px;font-size:22px;line-height:40px;letter-spacing:0.85px;">wing</div>
<div class="row" style="left:152px;top:684px;width:238px;"></div>
<svg class="a" style="left:150px;top:684px" width="100" height="40"><use href="#bulb" x="15" y="5" width="18" height="29" fill="url(#bulbB)"/><use href="#sk" x="59" y="5" width="30" height="30"/><use href="#pin" x="58" y="3" width="14" height="20"/></svg>
<div class="rt" style="left:268px;top:685px;font-size:22px;line-height:40px;letter-spacing:0.85px;">stepplate</div>
<div class="row" style="left:152px;top:732px;width:222px;"></div>
<svg class="a" style="left:150px;top:732px" width="100" height="40"><use href="#bulb" x="15" y="5" width="18" height="29" fill="url(#bulbB)"/><use href="#sk" x="59" y="5" width="30" height="30"/><use href="#pin" x="58" y="3" width="14" height="20"/></svg>
<div class="rt" style="left:268px;top:733px;font-size:22px;line-height:40px;letter-spacing:0.85px;">stepwall</div>
<div class="row" style="left:152px;top:780px;width:214px;"></div>
<svg class="a" style="left:150px;top:780px" width="100" height="40"><use href="#bulb" x="15" y="5" width="18" height="29" fill="url(#bulbB)"/><use href="#sk" x="59" y="5" width="30" height="30"/><use href="#pin" x="58" y="3" width="14" height="20"/></svg>
<div class="rt" style="left:268px;top:781px;font-size:22px;line-height:40px;letter-spacing:0.85px;">wallcap</div>
<div class="row" style="left:152px;top:828px;width:246px;"></div>
<svg class="a" style="left:150px;top:828px" width="100" height="40"><use href="#bulb" x="15" y="5" width="18" height="29" fill="url(#bulbB)"/><use href="#sk" x="59" y="5" width="30" height="30"/></svg>
<div class="rt" style="left:268px;top:829px;font-size:22px;line-height:40px;letter-spacing:0.85px;">underlight</div>
<div class="row" style="left:152px;top:876px;width:301px;"></div>
<svg class="a" style="left:150px;top:876px" width="100" height="40"><use href="#bulb" x="15" y="5" width="18" height="29" fill="url(#bulbB)"/><use href="#sk" x="59" y="5" width="30" height="30"/><use href="#pin" x="58" y="3" width="14" height="20"/></svg>
<div class="rt" style="left:268px;top:877px;font-size:22px;line-height:40px;letter-spacing:0.85px;">underlightangle</div>
<div class="row" style="left:152px;top:924px;width:278px;"></div>
<svg class="a" style="left:150px;top:924px" width="100" height="40"><use href="#bulb" x="15" y="5" width="18" height="29" fill="url(#bulbB)"/><use href="#sk" x="59" y="5" width="30" height="30"/><use href="#pin" x="58" y="3" width="14" height="20"/></svg>
<div class="rt" style="left:268px;top:925px;font-size:22px;line-height:40px;letter-spacing:0.85px;">underlightcut</div>
<div class="row" style="left:152px;top:972px;width:237px;"></div>
<svg class="a" style="left:150px;top:972px" width="100" height="40"><use href="#bulb" x="15" y="5" width="18" height="29" fill="url(#bulbB)"/><use href="#sk" x="59" y="5" width="30" height="30"/><use href="#pin" x="58" y="3" width="14" height="20"/></svg>
<div class="rt" style="left:268px;top:973px;font-size:22px;line-height:40px;letter-spacing:0.85px;">backplate</div>
<div class="row" style="left:152px;top:1020px;width:221px;"></div>
<svg class="a" style="left:150px;top:1020px" width="100" height="40"><use href="#bulb" x="15" y="5" width="18" height="29" fill="url(#bulbB)"/><use href="#sk" x="59" y="5" width="30" height="30"/></svg>
<div class="rt" style="left:268px;top:1021px;font-size:22px;line-height:40px;letter-spacing:0.85px;">sidewall</div>
<div class="row" style="left:152px;top:1068px;width:278px;"></div>
<svg class="a" style="left:150px;top:1068px" width="100" height="40"><use href="#bulb" x="15" y="5" width="18" height="29" fill="url(#bulbB)"/><use href="#sk" x="59" y="5" width="30" height="30"/><use href="#pin" x="58" y="3" width="14" height="20"/></svg>
<div class="rt" style="left:268px;top:1069px;font-size:22px;line-height:40px;letter-spacing:0.85px;">sidewallangle</div>
<div class="row" style="left:152px;top:1116px;width:269px;"></div>
<svg class="a" style="left:150px;top:1116px" width="100" height="40"><use href="#bulb" x="15" y="5" width="18" height="29" fill="url(#bulbB)"/><use href="#sk" x="59" y="5" width="30" height="30"/><use href="#pin" x="58" y="3" width="14" height="20"/></svg>
<div class="rt" style="left:268px;top:1117px;font-size:22px;line-height:40px;letter-spacing:0.85px;">underlightfill</div>
<div class="row" style="left:152px;top:1164px;width:310px;"></div>
<svg class="a" style="left:150px;top:1164px" width="100" height="40"><use href="#bulb" x="15" y="5" width="18" height="29" fill="url(#bulbB)"/><use href="#sk" x="59" y="5" width="30" height="30"/><use href="#pin" x="58" y="3" width="14" height="20"/></svg>
<div class="rt" style="left:268px;top:1165px;font-size:22px;line-height:40px;letter-spacing:0.85px;">underlightsweep</div>
<div class="row" style="left:152px;top:1212px;width:326px;"></div>
<svg class="a" style="left:150px;top:1212px" width="100" height="40"><use href="#bulb" x="15" y="5" width="18" height="29" fill="url(#bulbB)"/><use href="#sk" x="59" y="5" width="30" height="30"/><use href="#pin" x="58" y="3" width="14" height="20"/></svg>
<div class="rt" style="left:268px;top:1213px;font-size:22px;line-height:40px;letter-spacing:0.85px;">underlightsweep2</div>
<div class="row" style="left:152px;top:1260px;width:230px;"></div>
<svg class="a" style="left:150px;top:1260px" width="100" height="40"><use href="#bulb" x="15" y="5" width="18" height="29" fill="url(#bulbB)"/><use href="#sk" x="59" y="5" width="30" height="30"/><use href="#pin" x="58" y="3" width="14" height="20"/></svg>
<div class="rt" style="left:268px;top:1261px;font-size:22px;line-height:40px;letter-spacing:0.85px;">hingetab</div><svg class="a" style="left:3100px;top:120px" width="260" height="240"><defs><linearGradient id="vcL" x1="0" y1="0" x2="0" y2="1"><stop offset="0" stop-color="#e9e9e9"/><stop offset="1" stop-color="#d3d3d3"/></linearGradient><linearGradient id="vcR" x1="0" y1="0" x2="0" y2="1"><stop offset="0" stop-color="#ececec"/><stop offset="1" stop-color="#dadada"/></linearGradient><filter id="vcb" x="-50%" y="-50%" width="200%" height="200%"><feGaussianBlur stdDeviation="9"/></filter></defs><ellipse cx="128" cy="160" rx="80" ry="40" fill="#000" opacity="0.13" filter="url(#vcb)"/><path d="M65,64 L138,44 L203,70 L125,98 Z" fill="#e6e6e6"/><path d="M65,64 L125,98 L125,188 L70,148 Z" fill="url(#vcL)"/><path d="M125,98 L203,70 L198,154 L125,188 Z" fill="url(#vcR)"/><circle cx="125" cy="100" r="14" fill="#dfe1e4" opacity="0.8"/><g fill="none" stroke="#8d8d8d" stroke-width="1.3" stroke-dasharray="6 8"><path d="M65,64 L138,44 L203,70 L125,98 Z"/><path d="M125,98 L125,188 M70,148 L125,188 L198,154 L203,70"/></g><path d="M62,51 L70,148" stroke="#66dd66" stroke-width="2.5"/><path d="M70,148 L135,201" stroke="#7777ee" stroke-width="2.8"/><text x="53" y="45" font-family="Liberation Sans" font-size="24" font-weight="700" fill="#77ee77" transform="scale(1,1)">Y</text><text x="137" y="220" font-family="Liberation Sans" font-size="25" font-weight="700" fill="#7b7bf0">Z</text><text transform="translate(83,123) skewY(40) scale(0.8,1.5)" font-family="Liberation Sans" font-size="13" font-weight="700" fill="#9a9a9a">LEFT</text><text transform="translate(139,149) skewY(-36) scale(0.92,1.45)" font-family="Liberation Sans" font-size="16" font-weight="700" fill="#9a9a9a">FRONT</text><text transform="translate(114,73) skewX(-50) skewY(-18) scale(1,0.8)" font-family="Liberation Sans" font-size="12" fill="#a5a5a5">TOP</text></svg><div class="a" style="left:0;top:2000px;width:3360px;height:100px;background:#cbcbcb;"></div>
<svg class="a" style="left:0;top:2000px" width="3360" height="100"><defs><linearGradient id="tS" x1="0" y1="0" x2="1" y2="1"><stop offset="0" stop-color="#ffffff"/><stop offset="1" stop-color="#b6d0ea"/></linearGradient><linearGradient id="tE" x1="0" y1="0" x2="0" y2="1"><stop offset="0" stop-color="#c6daef"/><stop offset="1" stop-color="#8fb0d8"/></linearGradient><linearGradient id="tF" x1="0" y1="0" x2="0" y2="1"><stop offset="0" stop-color="#cfb0ea"/><stop offset="1" stop-color="#b27ce6"/></linearGradient><symbol id="tlS" overflow="visible"><rect x="1" y="1" width="30" height="30" fill="url(#tS)" stroke="#000" stroke-width="2.2"/><path d="M6,5 L6,26 L25,26" fill="none" stroke="#000" stroke-width="2.2"/><rect x="3" y="22" width="5" height="6" fill="#5a9ee0"/><path d="M10,21 L26,4 L30,3 L30,8 L14,24 Z" fill="#f3c43a"/><path d="M22,8 L26,4 L30,3 L30,8 L26,12 Z" fill="#ffee10"/><path d="M9,23 L12,19 L14,22 Z" fill="#222"/></symbol><symbol id="tlE" overflow="visible"><path d="M1,6 L6,1 L20,1 L20,25 L15,31 L1,31 Z" fill="#8aa8d4" stroke="#1d3566" stroke-width="1.8"/><rect x="1" y="6" width="14" height="25" fill="url(#tE)" stroke="#1d3566" stroke-width="1.8"/><rect x="2" y="23" width="12" height="7" fill="#e9ecf1"/><path d="M1,23 L1,31 L15,31 L20,25" fill="none" stroke="#444" stroke-width="1.8"/><path d="M3,26 L13,26" stroke="#c5cad4" stroke-width="1.2"/><path d="M28,30 L28,3" stroke="#444" stroke-width="2"/><path d="M24,8 L28,2 L32,8" fill="none" stroke="#444" stroke-width="1.8"/></symbol><symbol id="tlF" overflow="visible"><rect x="1" y="1" width="30" height="30" rx="9" fill="url(#tF)" stroke="#6b3aa8" stroke-width="2"/><path d="M9,3 L9,30 M16,2 L16,31 M23,3 L23,30 M2,10 L30,10 M2,17 L30,17 M2,24 L30,24" stroke="#8a55c8" stroke-width="1.5" opacity="0.8"/></symbol><symbol id="tlW" overflow="visible"><path d="M8,1 L17,1 L17,10 L25,10 Q29,12 29,18 L29,25 Q29,29 25,32 L21,31 L21,21 L10,21 L4,21 Q1,19 1,14 L1,7 Q2,2 8,1 Z" fill="#c6dbf0" stroke="#1d3566" stroke-width="2"/><path d="M10,12 L17,12 L10,19 Z M22,23 L27,18 L27,27 Z" fill="#8fb0d8"/><rect x="12" y="21" width="10" height="11" fill="#f4f4f4" stroke="#111" stroke-width="2.2"/></symbol><symbol id="tlM" overflow="visible"><path d="M2,6 Q2,2 8,2 L12,6 L12,28 L6,31 L2,28 Z" fill="#eee" stroke="#444" stroke-width="2"/><path d="M30,6 Q30,2 24,2 L20,6 L20,28 L26,31 L30,28 Z" fill="#a9c6e6" stroke="#1d3566" stroke-width="2"/><path d="M16,0 L16,32" stroke="#333" stroke-width="2"/></symbol></defs><g fill="#4d4d4d"><rect x="22" y="28" width="4" height="28"/><path d="M26,42 L46,29 L46,55 Z"/><path d="M70,42 L90,29 L90,55 Z"/><rect x="92" y="36" width="4" height="12"/><path d="M122,26 L146,42 L122,58 Z"/><rect x="170" y="36" width="4" height="12"/><path d="M176,29 L196,42 L176,55 Z"/><path d="M222,29 L242,42 L222,55 Z"/><rect x="242" y="28" width="4" height="28"/></g><rect x="308" y="76.5" width="2786" height="3" fill="#6a6a6a"/><rect x="307.5" y="68" width="4" height="9" fill="#6a6a6a"/><use href="#tlS" x="292.0" y="28"/><rect x="355.4" y="68" width="4" height="9" fill="#6a6a6a"/><use href="#tlE" x="340.4" y="28"/><rect x="403.4" y="68" width="4" height="9" fill="#6a6a6a"/><use href="#tlS" x="387.9" y="28"/><rect x="451.4" y="68" width="4" height="9" fill="#6a6a6a"/><use href="#tlE" x="436.4" y="28"/><rect x="499.3" y="68" width="4" height="9" fill="#6a6a6a"/><use href="#tlE" x="484.3" y="28"/><rect x="547.2" y="68" width="4" height="9" fill="#6a6a6a"/><use href="#tlS" x="531.8" y="28"/><rect x="595.2" y="68" width="4" height="9" fill="#6a6a6a"/><use href="#tlE" x="580.2" y="28"/><rect x="643.2" y="68" width="4" height="9" fill="#6a6a6a"/><use href="#tlE" x="628.2" y="28"/><rect x="691.1" y="68" width="4" height="9" fill="#6a6a6a"/><use href="#tlE" x="676.1" y="28"/><rect x="739.0" y="68" width="4" height="9" fill="#6a6a6a"/><use href="#tlS" x="723.5" y="28"/><rect x="787.0" y="68" width="4" height="9" fill="#6a6a6a"/><use href="#tlE" x="772.0" y="28"/><rect x="835.0" y="68" width="4" height="9" fill="#6a6a6a"/><use href="#tlE" x="820.0" y="28"/><rect x="882.9" y="68" width="4" height="9" fill="#6a6a6a"/><use href="#tlS" x="867.4" y="28"/><rect x="930.9" y="68" width="4" height="9" fill="#6a6a6a"/><use href="#tlE" x="915.9" y="28"/><rect x="978.8" y="68" width="4" height="9" fill="#6a6a6a"/><use href="#tlE" x="963.8" y="28"/><rect x="1026.8" y="68" width="4" height="9" fill="#6a6a6a"/><use href="#tlE" x="1011.7" y="28"/><rect x="1074.7" y="68" width="4" height="9" fill="#6a6a6a"/><use href="#tlE" x="1059.7" y="28"/><rect x="1122.7" y="68" width="4" height="9" fill="#6a6a6a"/><use href="#tlF" x="1108.7" y="28"/><rect x="1170.6" y="68" width="4" height="9" fill="#6a6a6a"/><use href="#tlF" x="1156.6" y="28"/><rect x="1218.6" y="68" width="4" height="9" fill="#6a6a6a"/><use href="#tlS" x="1203.1" y="28"/><rect x="1266.5" y="68" width="4" height="9" fill="#6a6a6a"/><use href="#tlS" x="1251.0" y="28"/><rect x="1314.5" y="68" width="4" height="9" fill="#6a6a6a"/><use href="#tlW" x="1300.5" y="28"/><rect x="1362.4" y="68" width="4" height="9" fill="#6a6a6a"/><use href="#tlS" x="1346.9" y="28"/><rect x="1410.4" y="68" width="4" height="9" fill="#6a6a6a"/><use href="#tlE" x="1395.4" y="28"/><rect x="1458.3" y="68" width="4" height="9" fill="#6a6a6a"/><use href="#tlE" x="1443.3" y="28"/><rect x="1506.2" y="68" width="4" height="9" fill="#6a6a6a"/><use href="#tlE" x="1491.3" y="28"/><rect x="1554.2" y="68" width="4" height="9" fill="#6a6a6a"/><use href="#tlS" x="1538.7" y="28"/><rect x="1602.2" y="68" width="4" height="9" fill="#6a6a6a"/><use href="#tlE" x="1587.2" y="28"/><rect x="1650.1" y="68" width="4" height="9" fill="#6a6a6a"/><use href="#tlE" x="1635.1" y="28"/><rect x="1698.1" y="68" width="4" height="9" fill="#6a6a6a"/><use href="#tlS" x="1682.6" y="28"/><rect x="1746.0" y="68" width="4" height="9" fill="#6a6a6a"/><use href="#tlE" x="1731.0" y="28"/><rect x="1794.0" y="68" width="4" height="9" fill="#6a6a6a"/><use href="#tlE" x="1779.0" y="28"/><rect x="1841.9" y="68" width="4" height="9" fill="#6a6a6a"/><use href="#tlE" x="1826.9" y="28"/><rect x="1889.9" y="68" width="4" height="9" fill="#6a6a6a"/><use href="#tlE" x="1874.9" y="28"/><rect x="1937.8" y="68" width="4" height="9" fill="#6a6a6a"/><use href="#tlE" x="1922.8" y="28"/><rect x="1985.8" y="68" width="4" height="9" fill="#6a6a6a"/><use href="#tlE" x="1970.7" y="28"/><rect x="2033.7" y="68" width="4" height="9" fill="#6a6a6a"/><use href="#tlE" x="2018.7" y="28"/><rect x="2081.7" y="68" width="4" height="9" fill="#6a6a6a"/><use href="#tlE" x="2066.7" y="28"/><rect x="2129.6" y="68" width="4" height="9" fill="#6a6a6a"/><use href="#tlE" x="2114.6" y="28"/><rect x="2177.6" y="68" width="4" height="9" fill="#6a6a6a"/><use href="#tlS" x="2162.1" y="28"/><rect x="2225.5" y="68" width="4" height="9" fill="#6a6a6a"/><use href="#tlE" x="2210.5" y="28"/><rect x="2273.4" y="68" width="4" height="9" fill="#6a6a6a"/><use href="#tlS" x="2257.9" y="28"/><rect x="2321.4" y="68" width="4" height="9" fill="#6a6a6a"/><use href="#tlW" x="2307.4" y="28"/><rect x="2369.3" y="68" width="4" height="9" fill="#6a6a6a"/><use href="#tlS" x="2353.8" y="28"/><rect x="2417.3" y="68" width="4" height="9" fill="#6a6a6a"/><use href="#tlE" x="2402.3" y="28"/><rect x="2465.2" y="68" width="4" height="9" fill="#6a6a6a"/><use href="#tlE" x="2450.3" y="28"/><rect x="2513.2" y="68" width="4" height="9" fill="#6a6a6a"/><use href="#tlE" x="2498.2" y="28"/><rect x="2561.2" y="68" width="4" height="9" fill="#6a6a6a"/><use href="#tlE" x="2546.2" y="28"/><rect x="2609.1" y="68" width="4" height="9" fill="#6a6a6a"/><use href="#tlE" x="2594.1" y="28"/><rect x="2657.1" y="68" width="4" height="9" fill="#6a6a6a"/><use href="#tlS" x="2641.6" y="28"/><rect x="2705.0" y="68" width="4" height="9" fill="#6a6a6a"/><use href="#tlW" x="2691.0" y="28"/><rect x="2753.0" y="68" width="4" height="9" fill="#6a6a6a"/><use href="#tlE" x="2738.0" y="28"/><rect x="2800.9" y="68" width="4" height="9" fill="#6a6a6a"/><use href="#tlE" x="2785.9" y="28"/><rect x="2848.9" y="68" width="4" height="9" fill="#6a6a6a"/><use href="#tlE" x="2833.9" y="28"/><rect x="2896.8" y="68" width="4" height="9" fill="#6a6a6a"/><use href="#tlE" x="2881.8" y="28"/><rect x="2944.8" y="68" width="4" height="9" fill="#6a6a6a"/><use href="#tlM" x="2930.8" y="28"/><rect x="2992.7" y="68" width="4" height="9" fill="#6a6a6a"/><use href="#tlS" x="2977.2" y="28"/><rect x="3040.7" y="68" width="4" height="9" fill="#6a6a6a"/><use href="#tlE" x="3025.7" y="28"/><rect x="3088.6" y="68" width="4" height="9" fill="#6a6a6a"/><use href="#tlE" x="3073.6" y="28"/><path d="M3104,16 L3128,16 L3128,24 L3119,33 L3113,33 L3104,24 Z" fill="#666"/><rect x="3114" y="30" width="4" height="49" fill="#666"/><g transform="translate(3336,40)" fill="#6b6b6b"><circle r="11.5"/><rect x="-3.2" y="-16" width="6.4" height="8" transform="rotate(0)"/><rect x="-3.2" y="-16" width="6.4" height="8" transform="rotate(45)"/><rect x="-3.2" y="-16" width="6.4" height="8" transform="rotate(90)"/><rect x="-3.2" y="-16" width="6.4" height="8" transform="rotate(135)"/><rect x="-3.2" y="-16" width="6.4" height="8" transform="rotate(180)"/><rect x="-3.2" y="-16" width="6.4" height="8" transform="rotate(225)"/><rect x="-3.2" y="-16" width="6.4" height="8" transform="rotate(270)"/><rect x="-3.2" y="-16" width="6.4" height="8" transform="rotate(315)"/><circle r="5.5" fill="#cbcbcb"/></g></svg>
<div class="a" style="left:8px;top:1942px;width:596px;height:46px;background:#d3d3d3;border:2px solid #a9a9a9;"></div>
<div class="a" style="left:62px;top:1954px;font-size:22px;line-height:24px;color:#626262;white-space:nowrap;transform:scaleX(0.96);transform-origin:0 0;">COMMENTS</div>
<svg class="a" style="left:550px;top:1942px" width="60" height="50"><circle cx="25" cy="25" r="8.5" fill="#333"/><path d="M25,20 L25,30 M20,25 L30,25" stroke="#ddd" stroke-width="2.2"/><rect x="48" y="14" width="2" height="22" fill="#8a8a8a"/><rect x="52" y="18" width="2" height="14" fill="#8a8a8a"/></svg>
<div class="a" style="left:1434px;top:1944px;width:289px;height:48px;background:#c9c9c9;"></div>
<div class="a" style="left:1551px;top:1944px;width:52px;height:48px;background:#5484b2;"></div>
<div class="a" style="left:1737px;top:1944px;width:187px;height:48px;background:#c9c9c9;"></div>
<svg class="a" style="left:1420px;top:1930px" width="520" height="70"><defs><linearGradient id="nMon" x1="0" y1="0" x2="0" y2="1"><stop offset="0" stop-color="#bcd3ee"/><stop offset="1" stop-color="#7fa6d6"/></linearGradient></defs><path d="M37,23 L44,31 L40,31 L40,51 L34,51 L34,31 L30,31 Z" fill="#eee" stroke="#333" stroke-width="1.2"/><path d="M28,33 Q16,36 16,39 Q16,44 37,44 Q56,44 58,39 Q58,35 45,33" fill="none" stroke="#333" stroke-width="1.3"/><path d="M26,43 L32,38 L32,48 Z" fill="#333"/><path d="M62,34 L79,34 L70.5,45 Z" fill="#333"/><rect x="89" y="37" width="27" height="19" rx="1.5" fill="#f0f0f0" stroke="#333" stroke-width="1.3"/><rect x="93" y="41" width="19" height="10" fill="#8a93a3"/><path d="M89,37 L96,29 L112,29 L112,37" fill="#ddd" stroke="#333" stroke-width="1.2"/><path d="M146,52 Q136,42 141,38 Q144,37 147,41 L147,28 Q148,24 151,25 L151,38 L152,23 Q154,20 157,23 L156,38 L159,25 Q162,22 164,26 L161,40 L165,30 Q168,28 168,32 L164,46 Q161,55 146,52 Z" fill="#f7f7f7" stroke="#333" stroke-width="1.2"/><circle cx="203" cy="36" r="10" fill="#e6f0f2" stroke="#333" stroke-width="1.6"/><path d="M210,43 L219,52" stroke="#333" stroke-width="3.5"/><path d="M216,24 L216,32 M212,28 L220,28 M212,35 L220,35" stroke="#333" stroke-width="1.3"/><rect x="243.5" y="23.5" width="29" height="29" fill="none" stroke="#555" stroke-width="1" stroke-dasharray="3 2"/><circle cx="256" cy="37" r="10" fill="#e6f0f2" stroke="#333" stroke-width="1.6"/><path d="M263,44 L271,52" stroke="#333" stroke-width="3.5"/><path d="M283,34 L301,34 L292,45 Z" fill="#333"/><rect x="326" y="23" width="29" height="22" fill="url(#nMon)" stroke="#333" stroke-width="1.4"/><rect x="323.5" y="21.5" width="34" height="26" fill="none" stroke="#333" stroke-width="1"/><path d="M337,47 L343,47 L345,52 L335,52 Z" fill="#ddd" stroke="#444" stroke-width="1"/><path d="M360,34 L378,34 L369,45 Z" fill="#333"/><rect x="387.5" y="22.5" width="28" height="29" fill="#e8e8ec" stroke="#333" stroke-width="1.3"/><path d="M392,23 L392,51 M397,23 L397,51 M402,23 L402,51 M407,23 L407,51 M412,23 L412,51 M388,27 L415,27 M388,32 L415,32 M388,37 L415,37 M388,42 L415,42 M388,47 L415,47" stroke="#777" stroke-width="1"/><path d="M422,34 L440,34 L431,45 Z" fill="#333"/><rect x="449.5" y="23.5" width="28" height="28" fill="#2d4e86"/><rect x="451" y="25" width="11" height="11" fill="#9dc0e8"/><rect x="465" y="25" width="11" height="11" fill="#9dc0e8"/><rect x="451" y="39" width="11" height="11" fill="#9dc0e8"/><rect x="465" y="39" width="11" height="11" fill="#9dc0e8"/><path d="M484,34 L502,34 L493,45 Z" fill="#333"/></svg>
<svg class="a" style="left:2280px;top:610px" width="120" height="90"><circle cx="38.9" cy="36.9" r="11" fill="#d2d2d2" stroke="#9a9a9a" stroke-width="1.5"/><path d="M16,36.9 L62,36.9 M38.9,14 L38.9,60" stroke="#453f41" stroke-width="2.4"/><rect x="37.5" y="35.5" width="3" height="3" fill="#fff"/></svg>
<div class="a" style="left:2333px;top:649px;font-size:19px;line-height:19px;color:#000;white-space:nowrap;text-shadow:0 0 2px #fff;">1,159<br>323</div>
</body></html>
